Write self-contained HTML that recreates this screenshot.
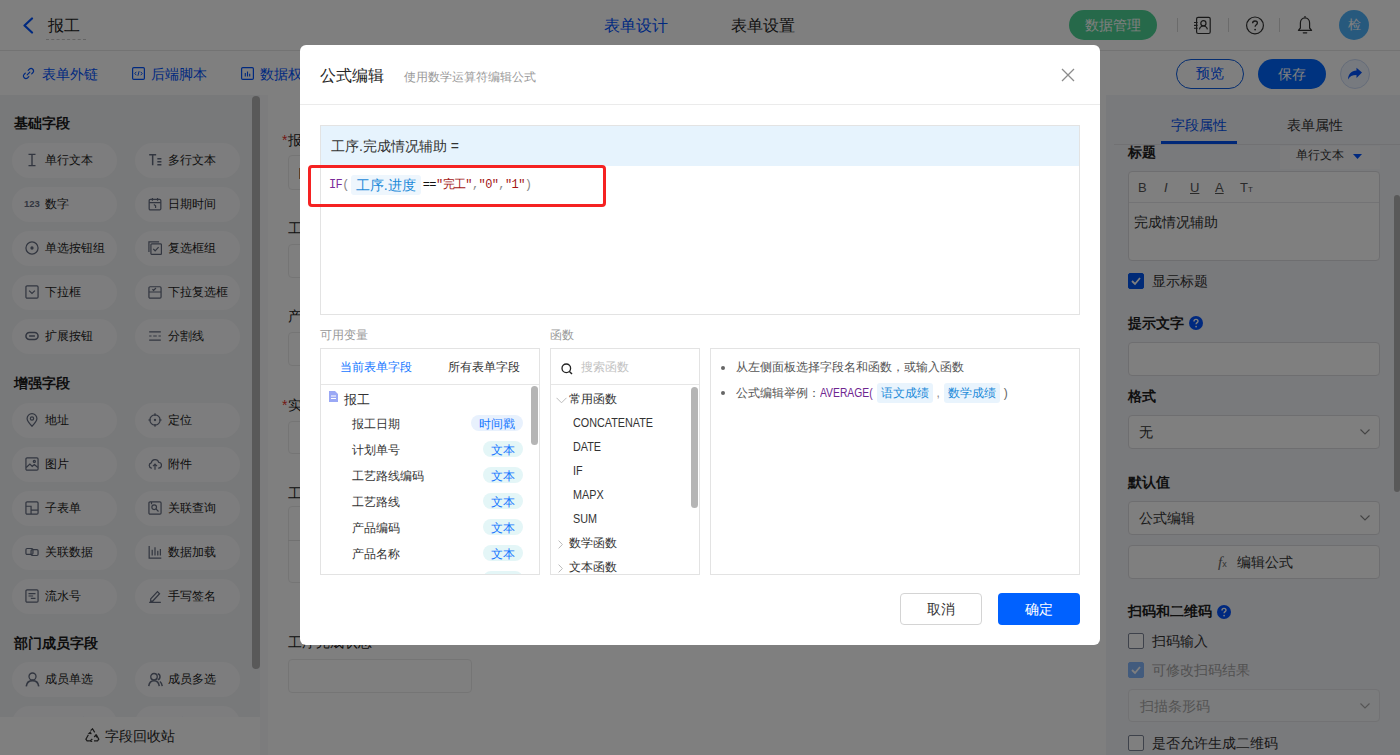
<!DOCTYPE html>
<html><head><meta charset="utf-8">
<style>
*{box-sizing:border-box;margin:0;padding:0}
html,body{width:1400px;height:755px;overflow:hidden;background:#fff}
body{font-family:"Liberation Sans",sans-serif;color:#262626;position:relative}
.a{position:absolute;white-space:nowrap}
svg{display:block}
/* header */
#hdr{left:0;top:0;width:1400px;height:51px;background:#fff;border-bottom:1px solid #e6e6e6}
#tb{left:0;top:51px;width:1400px;height:44px;background:#fff}
.blue{color:#0052ff}
/* sidebar */
#side{left:0;top:95px;width:268px;height:660px;background:#f1f2f5}
.grp{left:14px;font-size:14px;font-weight:bold;color:#1a1a1a;line-height:14px}
.pill{width:105px;height:35px;border-radius:18px;background:#fbfbfc;font-size:12px;line-height:35px;color:#222}
.pill svg{position:absolute;left:13px;top:10px}
.pill span{position:absolute;left:33px;top:0}
/* canvas */
#cv{left:268px;top:95px;width:838px;height:660px;background:#fff}
.lbl{font-size:14px;line-height:14px;color:#222}
.inp{border:1px solid #ebebeb;border-radius:4px;background:#fff}
/* right panel */
#rp{left:1106px;top:95px;width:294px;height:660px;background:#f3f4f8}
.rl{font-size:14px;font-weight:bold;line-height:14px;color:#1f1f1f}
.sel{border:1px solid #dcdde0;border-radius:4px;background:#fff;font-size:14px;color:#333}
.chk{width:16px;height:16px;border:1px solid #7d8596;border-radius:2px;background:#fff}
.code{font-family:"Liberation Mono",monospace;font-size:12px;line-height:20px;letter-spacing:-.6px;display:flex;align-items:center}
.code span{display:inline-block}
.chip{font-family:"Liberation Sans",sans-serif;font-size:14px;letter-spacing:0;color:#1b8ad9;background:#eef6fd;border-radius:3px;padding:0 5px;height:20px;line-height:20px;margin:0 2px}
.pnl{border:1px solid #e3e3e3;background:#fff;overflow:hidden}
.vi{font-size:12px;line-height:16px;color:#333}
.tag{height:16px;border-radius:8px;font-size:12px;line-height:18px;color:#1677ff;text-align:center}
.fi{font-size:12px;transform:scaleX(.9);transform-origin:0 0;line-height:16px;color:#333}
.bul{width:4px;height:4px;border-radius:50%;background:#666}
.hint{font-size:12px;line-height:16px;color:#555}
.chip2{display:inline-block;color:#1b8ad9;background:#e9f4fd;border-radius:3px;padding:0 4px;height:20px;line-height:20px}
/* overlay */
#mask{left:0;top:0;width:1400px;height:755px;background:rgba(0,0,0,.5)}
#modal{left:300px;top:45px;width:800px;height:600px;background:#fff;border-radius:6px}
</style></head><body>

<!-- HEADER -->
<div id="hdr" class="a">
  <svg class="a" style="left:22px;top:17px" width="12" height="17" viewBox="0 0 12 17"><path d="M10 1.5 L2.5 8.5 L10 15.5" fill="none" stroke="#0052ff" stroke-width="2.2" stroke-linecap="round" stroke-linejoin="round"/></svg>
  <div class="a" style="left:48px;top:15px;font-size:16px;line-height:22px;color:#222">报工</div>
  <div class="a" style="left:46px;top:39px;width:40px;border-top:1px dashed #c8c8c8"></div>
  <div class="a blue" style="left:604px;top:16px;font-size:16px;line-height:20px;color:#0052ff">表单设计</div>
  <div class="a" style="left:731px;top:16px;font-size:16px;line-height:20px;color:#262626">表单设置</div>
  <div class="a" style="left:1069px;top:10px;width:88px;height:30px;border-radius:15px;background:#4cd394;color:#fff;font-size:14px;line-height:30px;text-align:center">数据管理</div>
  <div class="a" style="left:1177px;top:18px;width:1px;height:14px;background:#d6d6d6"></div>
  <svg class="a" style="left:1193px;top:16px" width="19" height="19" viewBox="0 0 19 19"><rect x="3.6" y="1.3" width="13.6" height="16.2" rx="1.5" fill="none" stroke="#333" stroke-width="1.2"/><circle cx="10.4" cy="7.2" r="2.6" fill="none" stroke="#333" stroke-width="1.2"/><path d="M6.4 13.3c.6-2.2 2-3.3 4-3.3s3.4 1.1 4 3.3" fill="none" stroke="#333" stroke-width="1.2"/><path d="M1 6.5h3.6M1 9.4h3.6M1 12.3h3.6" stroke="#333" stroke-width="1.1"/></svg>
  <div class="a" style="left:1228px;top:18px;width:1px;height:14px;background:#d6d6d6"></div>
  <svg class="a" style="left:1245px;top:16px" width="20" height="19" viewBox="0 0 20 19"><circle cx="10" cy="9.4" r="8.4" fill="none" stroke="#333" stroke-width="1.2"/><path d="M7.6 7.3c0-1.4 1.1-2.3 2.4-2.3s2.4.9 2.4 2.1c0 1.7-2.3 1.8-2.3 3.7" fill="none" stroke="#333" stroke-width="1.3"/><circle cx="10.1" cy="13.6" r=".9" fill="#333"/></svg>
  <div class="a" style="left:1279px;top:18px;width:1px;height:14px;background:#d6d6d6"></div>
  <svg class="a" style="left:1297px;top:15px" width="16" height="20" viewBox="0 0 16 20"><path d="M8 2.8c-2.8 0-4.6 2.3-4.6 5.2v5L1.4 15.3h13.2L12.6 13V8c0-2.9-1.8-5.2-4.6-5.2z" fill="none" stroke="#333" stroke-width="1.2" stroke-linejoin="round"/><path d="M6.3 17.8h3.4" stroke="#333" stroke-width="1.3" stroke-linecap="round"/><circle cx="8" cy="1.7" r=".8" fill="#333"/></svg>
  <div class="a" style="left:1339px;top:10px;width:30px;height:30px;border-radius:50%;background:#4fb3fb;color:#fff;font-size:13px;line-height:30px;text-align:center">检</div>
</div>

<!-- TOOLBAR -->
<div id="tb" class="a">
  <svg class="a" style="left:22px;top:16px" width="13" height="13" viewBox="0 0 13 13"><path d="M5.2 7.8l2.6-2.6M6.2 3.3l1.3-1.3a2.5 2.5 0 013.5 3.5L9.7 6.8M3.3 6.2L2 7.5a2.5 2.5 0 003.5 3.5l1.3-1.3" fill="none" stroke="#0052ff" stroke-width="1.2" stroke-linecap="round"/></svg>
  <div class="a blue" style="left:42px;top:15px;font-size:14px;line-height:16px">表单外链</div>
  <svg class="a" style="left:132px;top:16px" width="13" height="13" viewBox="0 0 13 13"><rect x=".6" y=".6" width="11.8" height="11.8" rx="1.2" fill="none" stroke="#0052ff" stroke-width="1.2"/><path d="M4.3 4.8L2.8 6.5l1.5 1.7M8.7 4.8l1.5 1.7-1.5 1.7M7.1 4.2L5.9 8.8" fill="none" stroke="#0052ff" stroke-width="1"/></svg>
  <div class="a blue" style="left:151px;top:15px;font-size:14px;line-height:16px">后端脚本</div>
  <svg class="a" style="left:241px;top:16px" width="13" height="13" viewBox="0 0 13 13"><rect x=".6" y=".6" width="11.8" height="11.8" rx="1.2" fill="none" stroke="#0052ff" stroke-width="1.2"/><path d="M4.3 6v3.5M6.5 4.5v5M8.7 6.8v2.7" stroke="#0052ff" stroke-width="1.1"/></svg>
  <div class="a blue" style="left:260px;top:15px;font-size:14px;line-height:16px">数据权限</div>
  <div class="a" style="left:1176px;top:8px;width:68px;height:30px;border:1.5px solid #0a5be0;border-radius:15px;color:#0052ff;font-size:14px;line-height:27px;text-align:center">预览</div>
  <div class="a" style="left:1258px;top:8px;width:68px;height:30px;border-radius:15px;background:#0066ff;color:#fff;font-size:14px;line-height:30px;text-align:center">保存</div>
  <div class="a" style="left:1340px;top:8px;width:30px;height:30px;border-radius:50%;border:1px solid #cbd9f3;background:#eef4fe"></div>
  <svg class="a" style="left:1347px;top:16px" width="16" height="14" viewBox="0 0 16 14"><path d="M15 5.5L9.5 0.8V3.6C4.5 3.9 1.3 7 1 12.5c1.6-3 4.3-4.4 8.5-4.4v2.9z" fill="#0052ff"/></svg>
</div>

<!-- SIDEBAR -->
<div id="side" class="a">
<div class="a grp" style="top:21px">基础字段</div>
<div class="a grp" style="top:281px">增强字段</div>
<div class="a grp" style="top:541px">部门成员字段</div>
<div class="a pill" style="left:12px;top:48px"><svg width="14" height="14" viewBox="0 0 12 12" fill="none" stroke="#646c80" stroke-width="1.05"><path d="M3 1.2h6M3 10.8h6M6 1.2v9.6" stroke-width="1.2"/></svg><span>单行文本</span></div>
<div class="a pill" style="left:135px;top:48px"><svg width="14" height="14" viewBox="0 0 12 12" fill="none" stroke="#646c80" stroke-width="1.05"><path d="M1 1.5h6M4 1.5v9M8 5h3.5M8 7.5h3.5M8 10h3.5" stroke-width="1.3"/></svg><span>多行文本</span></div>
<div class="a pill" style="left:12px;top:92px"><svg width="16" height="12" viewBox="0 0 16 12" style="margin:0 0 0 -1px"><text x="0" y="10" font-family="Liberation Sans" font-weight="bold" font-size="9.5" fill="#646c80">123</text></svg><span>数字</span></div>
<div class="a pill" style="left:135px;top:92px"><svg width="14" height="14" viewBox="0 0 12 12" fill="none" stroke="#646c80" stroke-width="1.05"><rect x="1" y="2" width="10" height="9" rx="1"/><path d="M1 4.8h10M3.8 .8v2.4M8.2 .8v2.4M5 6.5l1.5 1v2"/></svg><span>日期时间</span></div>
<div class="a pill" style="left:12px;top:136px"><svg width="14" height="14" viewBox="0 0 12 12" fill="none" stroke="#646c80" stroke-width="1.05"><circle cx="6" cy="6" r="5.2"/><circle cx="6" cy="6" r="1.4" fill="#646c80" stroke="none"/></svg><span>单选按钮组</span></div>
<div class="a pill" style="left:135px;top:136px"><svg width="14" height="14" viewBox="0 0 12 12" fill="none" stroke="#646c80" stroke-width="1.05"><rect x="2.5" y="2.5" width="9" height="9" rx=".8"/><path d="M.8 9.5V.8h8.7M4.5 6.8l1.6 1.6 3-3.2"/></svg><span>复选框组</span></div>
<div class="a pill" style="left:12px;top:180px"><svg width="14" height="14" viewBox="0 0 12 12" fill="none" stroke="#646c80" stroke-width="1.05"><rect x=".8" y=".8" width="10.4" height="10.4" rx="1"/><path d="M3.5 4.8L6 7.2l2.5-2.4"/></svg><span>下拉框</span></div>
<div class="a pill" style="left:135px;top:180px"><svg width="14" height="14" viewBox="0 0 12 12" fill="none" stroke="#646c80" stroke-width="1.05"><rect x=".8" y="1.5" width="10.4" height="9.7" rx="1"/><path d="M.8 6h10.4M3.8 3.6l1 1 2-2"/></svg><span>下拉复选框</span></div>
<div class="a pill" style="left:12px;top:224px"><svg width="14" height="14" viewBox="0 0 12 12" fill="none" stroke="#646c80" stroke-width="1.05"><rect x=".8" y="3" width="10.4" height="6" rx="3" stroke-width="1.3"/><path d="M3.5 6h5" stroke-width="1.3"/></svg><span>扩展按钮</span></div>
<div class="a pill" style="left:135px;top:224px"><svg width="14" height="14" viewBox="0 0 12 12" fill="none" stroke="#646c80" stroke-width="1.05"><path d="M1 2.5h10M1 6h2M4.5 6h3M9 6h2M1 9.5h10"/></svg><span>分割线</span></div>
<div class="a pill" style="left:12px;top:308px"><svg width="14" height="14" viewBox="0 0 12 12" fill="none" stroke="#646c80" stroke-width="1.05"><path d="M6 11.3S1.8 7.3 1.8 4.8a4.2 4.2 0 018.4 0c0 2.5-4.2 6.5-4.2 6.5z"/><circle cx="6" cy="4.8" r="1.4"/></svg><span>地址</span></div>
<div class="a pill" style="left:135px;top:308px"><svg width="14" height="14" viewBox="0 0 12 12" fill="none" stroke="#646c80" stroke-width="1.05"><circle cx="6" cy="6" r="4.4"/><circle cx="6" cy="6" r="1" fill="#646c80" stroke="none"/><path d="M6 .3v2.2M6 9.5v2.2M.3 6h2.2M9.5 6h2.2"/></svg><span>定位</span></div>
<div class="a pill" style="left:12px;top:352px"><svg width="14" height="14" viewBox="0 0 12 12" fill="none" stroke="#646c80" stroke-width="1.05"><rect x=".8" y=".8" width="10.4" height="10.4" rx="1"/><path d="M1 9l3.2-3 2 2 1.8-1.5L11 9"/><circle cx="8" cy="3.8" r=".9"/></svg><span>图片</span></div>
<div class="a pill" style="left:135px;top:352px"><svg width="14" height="14" viewBox="0 0 12 12" fill="none" stroke="#646c80" stroke-width="1.05"><path d="M3.3 9.5H3A2.3 2.3 0 012.8 5 3.3 3.3 0 019.2 4.6 2.4 2.4 0 019 9.5h-.3"/><path d="M6 11V6.3M4.3 7.8L6 6.1l1.7 1.7"/></svg><span>附件</span></div>
<div class="a pill" style="left:12px;top:396px"><svg width="14" height="14" viewBox="0 0 12 12" fill="none" stroke="#646c80" stroke-width="1.05"><rect x=".8" y=".8" width="10.4" height="10.4" rx="1"/><path d="M.8 4.5h4.4v6.7M5.2 7.8h6"/></svg><span>子表单</span></div>
<div class="a pill" style="left:135px;top:396px"><svg width="14" height="14" viewBox="0 0 12 12" fill="none" stroke="#646c80" stroke-width="1.05"><rect x=".8" y=".8" width="10.4" height="10.4" rx="1"/><circle cx="5.3" cy="5.3" r="2"/><path d="M6.8 6.8l2.2 2.2M3 .8v2"/></svg><span>关联查询</span></div>
<div class="a pill" style="left:12px;top:440px"><svg width="14" height="14" viewBox="0 0 12 12" fill="none" stroke="#646c80" stroke-width="1.05"><rect x=".8" y="3" width="6" height="5" rx="1"/><rect x="5.2" y="4" width="6" height="5" rx="1"/></svg><span>关联数据</span></div>
<div class="a pill" style="left:135px;top:440px"><svg width="14" height="14" viewBox="0 0 12 12" fill="none" stroke="#646c80" stroke-width="1.05"><path d="M1 .8v10.4h10.4M3.6 4v5M6 2v7M8.4 5v4M10.6 3.5v5.5"/></svg><span>数据加载</span></div>
<div class="a pill" style="left:12px;top:484px"><svg width="14" height="14" viewBox="0 0 12 12" fill="none" stroke="#646c80" stroke-width="1.05"><rect x=".8" y=".8" width="10.4" height="10.4" rx="1"/><path d="M3 4h6M3 6h4M5 8h4"/></svg><span>流水号</span></div>
<div class="a pill" style="left:135px;top:484px"><svg width="14" height="14" viewBox="0 0 12 12" fill="none" stroke="#646c80" stroke-width="1.05"><path d="M2.3 8.5l5.8-6.2 1.8 1.8-5.8 6.2H2.3zM1 11.5h10"/></svg><span>手写签名</span></div>
<div class="a pill" style="left:12px;top:567px"><svg width="15" height="15" viewBox="0 0 12 12" fill="none" stroke="#646c80" stroke-width="1.05"><circle cx="6" cy="3.6" r="2.8"/><path d="M1 11.5c.4-2.8 2.4-4.6 5-4.6s4.6 1.8 5 4.6" stroke-width="1.3"/></svg><span>成员单选</span></div>
<div class="a pill" style="left:135px;top:567px"><svg width="15" height="15" viewBox="0 0 12 12" fill="none" stroke="#646c80" stroke-width="1.05"><circle cx="4.8" cy="3.8" r="2.6"/><path d="M.6 11.3c.3-2.6 2-4.3 4.2-4.3s3.9 1.7 4.2 4.3M7.8 1.4a2.5 2.5 0 010 4.8M9.5 7.6c1 .7 1.7 2 1.9 3.7" stroke-width="1.2"/></svg><span>成员多选</span></div>
<div class="a pill" style="left:12px;top:611px"><span>成员部门</span></div>
<div class="a pill" style="left:135px;top:611px"><span>部门多选</span></div>
<div class="a" style="left:260px;top:0;width:8px;height:660px;background:#f8f9fb"></div>
<div class="a" style="left:252px;top:1px;width:8px;height:573px;border-radius:4px;background:#b3b3b3"></div>
<div class="a" style="left:0;top:622px;width:260px;height:38px;background:#fff;font-size:14px;line-height:38px;color:#262626"><svg class="a" style="left:85px;top:11px" width="15" height="14" viewBox="0 0 15 14" fill="none" stroke="#333" stroke-width="1.2"><path d="M5.6 2.6L7.5.8l2.2 3.6M11.2 6.6l2.6 4.5-1.3 1.8H9M4.8 12.9H2.1L.9 11.1 3.4 6.7M6 3.8L4.1 5.4l2.4.3M11.9 9.4l-1.1-2.3-1.6 1.9M7.3 11l-1.9 1.8 1.9 1.7"/></svg><span class="a" style="left:105px;top:0">字段回收站</span></div>
</div>

<!-- CANVAS -->
<div id="cv" class="a">
  <div class="a lbl" style="left:14px;top:38px"><span style="color:#e8322a;margin-right:1px">*</span>报工日期</div>
  <div class="a inp" style="left:20px;top:60px;width:400px;height:35px"></div>
  <div class="a" style="left:31px;top:73px;width:1px;height:11px;background:#c0804a"></div>
  <div class="a lbl" style="left:20px;top:126px">工序名称</div>
  <div class="a inp" style="left:20px;top:149px;width:400px;height:34px"></div>
  <div class="a lbl" style="left:20px;top:214px">产品名称</div>
  <div class="a inp" style="left:20px;top:237px;width:400px;height:34px"></div>
  <div class="a lbl" style="left:14px;top:303px"><span style="color:#e8322a;margin-right:1px">*</span>实际数量</div>
  <div class="a inp" style="left:20px;top:326px;width:400px;height:33px"></div>
  <div class="a lbl" style="left:20px;top:391px">工序</div>
  <div class="a inp" style="left:20px;top:411px;width:700px;height:77px"></div>
  <div class="a" style="left:20px;top:445px;width:700px;height:1px;background:#e3e3e3"></div>
  <div class="a lbl" style="left:20px;top:540px">工序完成状态</div>
  <div class="a inp" style="left:20px;top:564px;width:184px;height:34px"></div>
</div>

<!-- RIGHT PANEL -->
<div id="rp" class="a">
  <div class="a" style="left:0;top:50px;width:294px;height:610px;overflow:hidden">
    <div class="a rl" style="left:22px;top:0px">标题</div>
    <div class="a" style="left:174px;top:1px;width:100px;height:23px;background:#f9f9fb;font-size:12px;line-height:23px;color:#333"><span class="a" style="left:16px;top:-2px">单行文本</span><svg class="a" style="left:73px;top:8px" width="9" height="5" viewBox="0 0 9 5"><path d="M0 0h9L4.5 5z" fill="#0052ff"/></svg></div>
    <div class="a" style="left:22px;top:26px;width:252px;height:90px;border:1px solid #dcdde0;border-radius:4px;background:#fff"></div>
    <div class="a" style="left:23px;top:57px;width:250px;height:1px;background:#e6e7ea"></div>
    <div class="a" style="left:32px;top:29px;font-size:13px;line-height:28px;color:#555">B</div>
    <div class="a" style="left:58px;top:29px;font-size:13px;line-height:28px;color:#555;font-style:italic">I</div>
    <div class="a" style="left:84px;top:29px;font-size:13px;line-height:28px;color:#555;text-decoration:underline">U</div>
    <div class="a" style="left:109px;top:29px;font-size:13px;line-height:28px;color:#555;text-decoration:underline">A</div>
    <div class="a" style="left:134px;top:29px;font-size:13px;line-height:28px;color:#555">T<span style="font-size:8px">T</span></div>
    <div class="a" style="left:28px;top:69px;font-size:14px;line-height:16px;color:#333">完成情况辅助</div>
    <div class="a chk" style="left:22px;top:128px;background:#0055ee;border-color:#0055ee"><svg width="14" height="14" viewBox="0 0 14 14"><path d="M3 7l3 3 5-6" fill="none" stroke="#fff" stroke-width="1.8"/></svg></div>
    <div class="a" style="left:46px;top:127px;font-size:14px;line-height:18px;color:#333">显示标题</div>
    <div class="a rl" style="left:22px;top:171px">提示文字</div>
    <svg class="a" style="left:83px;top:171px" width="14" height="14" viewBox="0 0 14 14"><circle cx="7" cy="7" r="7" fill="#0052ff"/><path d="M5 5.4c0-1.2.9-2 2-2s2 .8 2 1.8c0 1.4-1.9 1.4-1.9 3" fill="none" stroke="#fff" stroke-width="1.4"/><circle cx="7.1" cy="10.6" r=".85" fill="#fff"/></svg>
    <div class="a sel" style="left:22px;top:197px;width:252px;height:34px"></div>
    <div class="a rl" style="left:22px;top:244px">格式</div>
    <div class="a sel" style="left:22px;top:270px;width:252px;height:34px"><span class="a" style="left:10px;top:8px;line-height:16px">无</span><svg class="a" style="left:231px;top:13px" width="10" height="6" viewBox="0 0 10 6"><path d="M.5.5L5 5 9.5.5" fill="none" stroke="#888" stroke-width="1.1"/></svg></div>
    <div class="a rl" style="left:22px;top:330px">默认值</div>
    <div class="a sel" style="left:22px;top:356px;width:252px;height:34px"><span class="a" style="left:10px;top:8px;line-height:16px">公式编辑</span><svg class="a" style="left:231px;top:13px" width="10" height="6" viewBox="0 0 10 6"><path d="M.5.5L5 5 9.5.5" fill="none" stroke="#888" stroke-width="1.1"/></svg></div>
    <div class="a sel" style="left:22px;top:400px;width:252px;height:34px"><span class="a" style="left:89px;top:7px;line-height:18px;font-family:'Liberation Serif',serif;font-style:italic;color:#666;font-size:15px">f<span style="font-size:9px;font-style:normal;font-family:'Liberation Sans'">x</span></span><span class="a" style="left:108px;top:8px;line-height:16px">编辑公式</span></div>
    <div class="a rl" style="left:22px;top:459px">扫码和二维码</div>
    <svg class="a" style="left:111px;top:460px" width="14" height="14" viewBox="0 0 14 14"><circle cx="7" cy="7" r="7" fill="#0052ff"/><path d="M5 5.4c0-1.2.9-2 2-2s2 .8 2 1.8c0 1.4-1.9 1.4-1.9 3" fill="none" stroke="#fff" stroke-width="1.4"/><circle cx="7.1" cy="10.6" r=".85" fill="#fff"/></svg>
    <div class="a chk" style="left:22px;top:488px"></div>
    <div class="a" style="left:46px;top:487px;font-size:14px;line-height:18px;color:#333">扫码输入</div>
    <div class="a chk" style="left:22px;top:517px;background:#85b6fa;border-color:#85b6fa"><svg width="14" height="14" viewBox="0 0 14 14"><path d="M3 7l3 3 5-6" fill="none" stroke="#fff" stroke-width="1.8"/></svg></div>
    <div class="a" style="left:46px;top:516px;font-size:14px;line-height:18px;color:#a3a3a3">可修改扫码结果</div>
    <div class="a sel" style="left:22px;top:544px;width:252px;height:33px;background:#f7f8fa;border-color:#e4e5e8;color:#a8a8a8"><span class="a" style="left:11px;top:8px;line-height:16px">扫描条形码</span><svg class="a" style="left:231px;top:13px" width="10" height="6" viewBox="0 0 10 6"><path d="M.5.5L5 5 9.5.5" fill="none" stroke="#aaa" stroke-width="1.1"/></svg></div>
    <div class="a chk" style="left:22px;top:590px"></div>
    <div class="a" style="left:46px;top:589px;font-size:14px;line-height:18px;color:#333">是否允许生成二维码</div>
  </div>
  <div class="a" style="left:8px;top:49px;width:286px;height:1px;background:#e2e3e6"></div>
  <div class="a" style="left:65px;top:22px;font-size:14px;line-height:16px;color:#0050f0">字段属性</div>
  <div class="a" style="left:181px;top:22px;font-size:14px;line-height:16px;color:#333">表单属性</div>
  <div class="a" style="left:55px;top:46px;width:76px;height:3px;background:#0050f0"></div>
  <div class="a" style="left:288px;top:100px;width:6px;height:297px;border-radius:3px;background:#b3b3b3"></div>
</div>

<div id="mask" class="a"></div>

<!-- MODAL -->
<div id="modal" class="a">
  <div class="a" style="left:20px;top:21px;font-size:16px;line-height:20px;color:#262626">公式编辑</div>
  <div class="a" style="left:104px;top:24px;font-size:12px;line-height:16px;color:#9a9a9a">使用数学运算符编辑公式</div>
  <svg class="a" style="left:761px;top:23px" width="14" height="14" viewBox="0 0 14 14"><path d="M1 1l12 12M13 1L1 13" stroke="#8c8c8c" stroke-width="1.3"/></svg>
  <div class="a" style="left:0;top:59px;width:800px;height:1px;background:#ebebeb"></div>
  <div class="a" style="left:20px;top:80px;width:760px;height:190px;border:1px solid #e3e3e3;background:#fff"></div>
  <div class="a" style="left:21px;top:81px;width:758px;height:40px;background:#e6f3fd"></div>
  <div class="a" style="left:31px;top:93px;font-size:14px;line-height:16px;color:#333">工序.完成情况辅助 =</div>
  <div class="a code" style="left:29px;top:130px">
    <span style="color:#7b2a9a">IF</span><span style="color:#888">(</span><span class="chip">工序.进度</span><span style="color:#111">==</span><span style="color:#a31515">"完工"</span><span style="color:#888">,</span><span style="color:#a31515">"0"</span><span style="color:#888">,</span><span style="color:#a31515">"1"</span><span style="color:#888">)</span>
  </div>
  <div class="a" style="left:8px;top:120px;width:298px;height:42px;border:3px solid #f52222;border-radius:4px"></div>

  <div class="a" style="left:20px;top:282px;font-size:12px;line-height:16px;color:#999">可用变量</div>
  <div class="a" style="left:250px;top:282px;font-size:12px;line-height:16px;color:#999">函数</div>

  <div class="a pnl" style="left:20px;top:303px;width:220px;height:227px">
    <div class="a" style="left:19px;top:10px;font-size:12px;line-height:16px;color:#1677ff">当前表单字段</div>
    <div class="a" style="left:127px;top:10px;font-size:12px;line-height:16px;color:#333">所有表单字段</div>
    <div class="a" style="left:0;top:35px;width:218px;height:1px;background:#e6e6e6"></div>
    <svg class="a" style="left:7px;top:42px" width="11" height="11" viewBox="0 0 11 11"><path d="M1 0h6l3 3v8H1z" fill="#9aa8f5"/><path d="M3 5h5M3 7.5h5" stroke="#fff" stroke-width="1"/></svg>
    <div class="a vi" style="left:23px;top:43px;font-size:13px">报工</div>
    <div class="a vi" style="left:31px;top:67px">报工日期</div><div class="a tag" style="left:150px;top:66px;width:52px;background:#e8f1fd">时间戳</div>
    <div class="a vi" style="left:31px;top:93px">计划单号</div><div class="a tag" style="left:162px;top:92px;width:40px;background:#e4f6f7">文本</div>
    <div class="a vi" style="left:31px;top:119px">工艺路线编码</div><div class="a tag" style="left:162px;top:118px;width:40px;background:#e4f6f7">文本</div>
    <div class="a vi" style="left:31px;top:145px">工艺路线</div><div class="a tag" style="left:162px;top:144px;width:40px;background:#e4f6f7">文本</div>
    <div class="a vi" style="left:31px;top:171px">产品编码</div><div class="a tag" style="left:162px;top:170px;width:40px;background:#e4f6f7">文本</div>
    <div class="a vi" style="left:31px;top:197px">产品名称</div><div class="a tag" style="left:162px;top:196px;width:40px;background:#e4f6f7">文本</div>
    <div class="a vi" style="left:31px;top:223px">产品规格</div><div class="a tag" style="left:162px;top:222px;width:40px;background:#e4f6f7">文本</div>
    <div class="a" style="left:210px;top:37px;width:7px;height:59px;border-radius:4px;background:#b5b5b5"></div>
  </div>

  <div class="a pnl" style="left:250px;top:303px;width:150px;height:227px">
    <svg class="a" style="left:10px;top:14px" width="12" height="12" viewBox="0 0 12 12"><circle cx="5.3" cy="5.3" r="4.3" fill="none" stroke="#222" stroke-width="1.3"/><path d="M8.4 8.4l2.6 2.6" stroke="#222" stroke-width="1.4"/></svg>
    <div class="a" style="left:30px;top:10px;font-size:12px;line-height:16px;color:#c2c2c2">搜索函数</div>
    <div class="a" style="left:0;top:35px;width:148px;height:1px;background:#e6e6e6"></div>
    <svg class="a" style="left:5px;top:48px" width="11" height="7" viewBox="0 0 11 7"><path d="M.5.8L5.5 5.8 10.5.8" fill="none" stroke="#bbb" stroke-width="1"/></svg><div class="a fi" style="left:18px;top:42px;font-size:12px;letter-spacing:0;transform:none">常用函数</div>
    <div class="a fi" style="left:22px;top:66px">CONCATENATE</div>
    <div class="a fi" style="left:22px;top:90px">DATE</div>
    <div class="a fi" style="left:22px;top:114px">IF</div>
    <div class="a fi" style="left:22px;top:138px">MAPX</div>
    <div class="a fi" style="left:22px;top:162px">SUM</div>
    <svg class="a" style="left:7px;top:191px" width="5" height="9" viewBox="0 0 5 9"><path d="M.6.6l3.8 3.9L.6 8.4" fill="none" stroke="#bbb" stroke-width="1"/></svg><div class="a fi" style="left:18px;top:186px;font-size:12px;letter-spacing:0;transform:none">数学函数</div>
    <svg class="a" style="left:7px;top:215px" width="5" height="9" viewBox="0 0 5 9"><path d="M.6.6l3.8 3.9L.6 8.4" fill="none" stroke="#bbb" stroke-width="1"/></svg><div class="a fi" style="left:18px;top:210px;font-size:12px;letter-spacing:0;transform:none">文本函数</div>
    <div class="a" style="left:140px;top:38px;width:7px;height:121px;border-radius:4px;background:#b5b5b5"></div>
  </div>

  <div class="a pnl" style="left:410px;top:303px;width:370px;height:227px">
    <div class="a bul" style="left:10px;top:17px"></div>
    <div class="a hint" style="left:25px;top:10px">从左侧面板选择字段名和函数，或输入函数</div>
    <div class="a bul" style="left:10px;top:42px"></div>
    <div class="a hint" style="left:25px;top:34px">公式编辑举例：<span style="color:#6e2590;display:inline-block;transform:scaleX(.86);transform-origin:0 50%;margin-right:-8.7px">AVERAGE(</span><span class="chip2" style="margin-left:5px">语文成绩</span><span style="color:#888;margin:0 4px 0 3px">,</span><span class="chip2">数学成绩</span><span style="color:#666;margin-left:4px">)</span></div>
  </div>

  <div class="a" style="left:600px;top:548px;width:82px;height:32px;border:1px solid #d4d4d4;border-radius:4px;font-size:14px;line-height:30px;text-align:center;color:#333">取消</div>
  <div class="a" style="left:698px;top:548px;width:82px;height:32px;border-radius:4px;background:#0061ff;font-size:14px;line-height:32px;text-align:center;color:#fff">确定</div>
</div>

</body></html>
